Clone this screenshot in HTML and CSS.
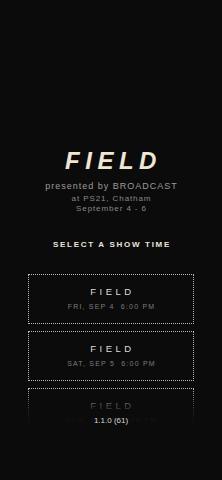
FILE: index.html
```html
<!DOCTYPE html>
<html>
<head>
    <meta charset="UTF-8">
    <meta name="viewport" content="width=device-width, initial-scale=1.0">
    <title>FIELD</title>
    <link rel="stylesheet" href="styles.css">
</head>
<body>
    <div class="screen">
        <div class="header">
            <h1 class="title">FIELD</h1>
            <div class="presenter">presented by BROADCAST</div>
            <div class="venue">at PS21, Chatham<br>September 4 - 6</div>
        </div>

        <div class="select-label">SELECT A SHOW TIME</div>

        <div class="shows">
            <div class="show">
                <div class="show-name">FIELD</div>
                <div class="show-time">FRI, SEP 4&nbsp;&nbsp;6:00 PM</div>
            </div>
            <div class="show">
                <div class="show-name">FIELD</div>
                <div class="show-time">SAT, SEP 5&nbsp;&nbsp;6:00 PM</div>
            </div>
            <div class="show">
                <div class="show-name">FIELD</div>
                <div class="show-time">SUN, SEP 6&nbsp;&nbsp;6:00 PM</div>
            </div>
        </div>

        <div class="fade"></div>
        <div class="version">1.1.0 (61)</div>
    </div>
</body>
</html>
```

FILE: styles.css
```css
/* FIELD show picker */
body {
    margin: 0;
    padding: 0;
    background-color: #0b0b0b;
    font-family: "Liberation Sans", Arial, sans-serif;
}

.screen {
    position: relative;
    height: 480px;
    overflow: hidden;
    display: flex;
    flex-direction: column;
    align-items: center;
}

.header {
    padding-top: 148px;
    text-align: center;
}

.title {
    margin: 0;
    padding-left: 5px;
    font-size: 24px;
    font-weight: bold;
    font-style: italic;
    letter-spacing: 5.5px;
    line-height: 25px;
    color: #efe7d4;
}

.presenter {
    margin-top: 8px;
    padding-left: 1px;
    font-size: 9px;
    letter-spacing: 1px;
    line-height: 11px;
    color: #9c9a96;
}

.venue {
    margin-top: 2px;
    padding-left: 1px;
    font-size: 8px;
    letter-spacing: 0.9px;
    line-height: 10px;
    color: #8a8884;
}

.select-label {
    margin-top: 26px;
    padding-left: 2px;
    font-size: 8px;
    font-weight: bold;
    letter-spacing: 1.7px;
    line-height: 10px;
    color: #ece6da;
}

.shows {
    margin-top: 24px;
    width: 166px;
    display: flex;
    flex-direction: column;
    gap: 7px;
}

.show {
    height: 48px;
    border: 1px dotted #b8b8b8;
    text-align: center;
}

.show-name {
    margin-top: 12px;
    padding-left: 3px;
    font-size: 9.5px;
    letter-spacing: 3.5px;
    line-height: 10px;
    color: #dcdcdc;
}

.show-time {
    margin-top: 5px;
    padding-left: 1px;
    font-size: 7px;
    letter-spacing: 1.2px;
    line-height: 9px;
    color: #7c7c7c;
}

.fade {
    position: absolute;
    left: 0;
    right: 0;
    top: 389px;
    bottom: 0;
    background: linear-gradient(to bottom, rgba(11, 11, 11, 0) 0px, rgba(11, 11, 11, 0.75) 18px, #0b0b0b 36px);
}

.version {
    position: absolute;
    left: 0;
    right: 0;
    top: 416px;
    text-align: center;
    font-size: 8px;
    line-height: 10px;
    color: #d8d8d8;
}
```
